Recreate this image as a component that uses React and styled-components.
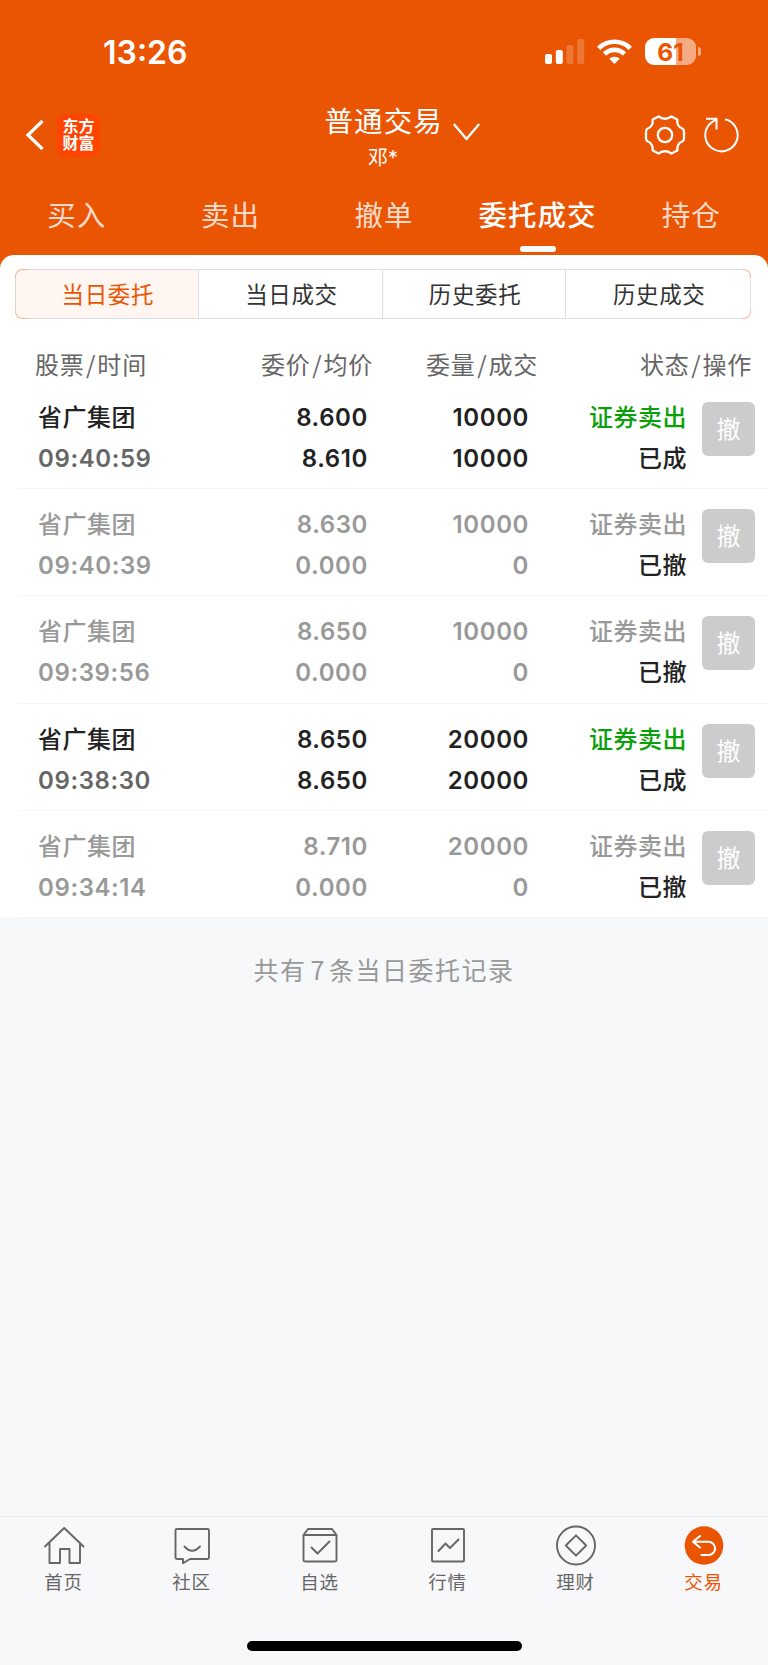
import React, { useState } from 'react'
import styled, { createGlobalStyle } from 'styled-components'

const ORANGE = '#ea5504'

const GlobalStyle = createGlobalStyle`
  * {
    box-sizing: border-box;
  }
  body {
    margin: 0;
    background: #f7f8fa;
    font-family: Inter, 'Noto Sans CJK SC', sans-serif;
    color: #222222;
  }
  button {
    border: none;
    background: none;
    padding: 0;
    font: inherit;
    color: inherit;
  }
  svg {
    display: block;
    flex: none;
    overflow: visible;
  }
`
const Page = styled.div`
  width: 768px;
  height: 1665px;
  display: flex;
  flex-direction: column;
  overflow: hidden;
`
const Header = styled.header`
  height: 271px;
  flex: none;
  background: ${ORANGE};
  color: white;
`
const StatusBar = styled.div`
  height: 103px;
  padding: 0 67px 0 103px;
  display: flex;
  align-items: center;
  justify-content: space-between;
`
const Clock = styled.div`
  padding-top: 3px;
  font-size: 32px;
  font-weight: 600;
  line-height: 40px;
`
const StatusIcons = styled.div`
  display: flex;
  align-items: center;
  gap: 13px;
`
const Battery = styled.div`
  display: flex;
  align-items: center;
  gap: 2px;
`
const BatteryBody = styled.div`
  width: 51px;
  height: 27px;
  border-radius: 9px;
  background: linear-gradient(to right, white ${p => p.$level}%, rgba(255, 255, 255, 0.5) ${p => p.$level}%);
  color: ${ORANGE};
  font-size: 24.5px;
  font-weight: 700;
  line-height: 28px;
  text-align: center;
`
const BatteryTip = styled.div`
  width: 3px;
  height: 9px;
  border-radius: 0 4px 4px 0;
  background: rgba(255, 255, 255, 0.5);
`
const NavBar = styled.div`
  height: 83px;
  padding: 0 29px 0 26px;
  display: grid;
  grid-template-columns: 1fr auto 1fr;
`
const NavLeft = styled.div`
  height: 64px;
  display: flex;
  align-items: center;
  gap: 13px;
`
const NavRight = styled(NavLeft)`
  justify-content: flex-end;
  gap: 19px;
`
const Logo = styled.div`
  width: 43px;
  height: 43px;
  border-radius: 9px;
  background: #ff4400;
  display: grid;
  grid-template-columns: 16px 16px;
  grid-template-rows: 17px 17px;
  place-content: center;
  font-size: 16px;
  font-weight: 700;
  line-height: 16px;
`
const Account = styled.div`
  display: grid;
  grid-template-columns: 117px 27px;
  column-gap: 11px;
  justify-content: center;
  padding: 2px 0 0 39px;
`
const AccountTitle = styled.div`
  font-size: 28.5px;
  letter-spacing: 1.1px;
  line-height: 34px;
  white-space: nowrap;
`
const AccountName = styled.div`
  font-size: 20px;
  line-height: 26px;
  margin-top: 6px;
  text-align: center;
`
const TitleArrow = styled.div`
  padding-top: 18px;
`
const Tabs = styled.div`
  height: 69px;
  display: grid;
  grid-template-columns: repeat(5, 1fr);
`
const Tab = styled.button`
  display: flex;
  flex-direction: column;
  align-items: center;
  font-size: 28.5px;
  line-height: 40px;
  padding-top: 10px;
  letter-spacing: 1px;
  font-weight: ${p => (p.$active ? 500 : 400)};
  color: ${p => (p.$active ? 'white' : 'rgba(255, 255, 255, 0.8)')};

  &::after {
    content: '';
    width: 36px;
    height: 6px;
    margin-top: 10px;
    border-radius: 3px;
    background: ${p => (p.$active ? 'white' : 'transparent')};
  }
`
const Panel = styled.section`
  flex: none;
  margin-top: -16px;
  height: 662px;
  padding-top: 14px;
  border-radius: 14px 14px 0 0;
  background: white;
`
const Segments = styled.div`
  height: 50px;
  margin: 0 17px 0 14.5px;
  display: grid;
  grid-template-columns: repeat(4, 1fr);
  border: 1px solid transparent;
  border-radius: 8px;
  background:
    linear-gradient(white, white) padding-box,
    linear-gradient(#dcdfe5, #dcdfe5) right center / 4px calc(100% - 16px) no-repeat border-box,
    linear-gradient(#e3d3cd, #e3d3cd) left center / 4px calc(100% - 16px) no-repeat border-box,
    linear-gradient(to right, #efab8a 8px, #dcdfe5 17px, #dcdfe5 calc(100% - 8px), #efab8a calc(100% - 8px)) border-box;
  overflow: hidden;
`
const Segment = styled.button`
  padding-left: 2px;
  font-size: 22.5px;
  letter-spacing: 0.6px;
  line-height: 49px;
  border-right: 1px solid #d9dce2;
  color: ${p => (p.$active ? ORANGE : '#333333')};
  background: ${p => (p.$active ? '#fff5f1' : 'white')};

  &:last-child {
    border-right: none;
  }
`
const ColumnHeads = styled.div`
  height: 63px;
  padding: 11px 16px 0 35px;
  display: grid;
  grid-template-columns: 169px 169px 165px 1fr;
  font-size: 24px;
  line-height: 68px;
  letter-spacing: 0.8px;
  color: #666666;
  white-space: nowrap;
`
const ColumnHead = styled.div`
  text-align: ${p => p.$align};
`
const Slash = styled.span`
  margin: 0 1px 0 1.5px;
  font-family: 'Noto Sans CJK SC', sans-serif;
`
const Row = styled.div`
  height: 107.2px;
  margin-left: 18px;
  padding: 15px 13px 0 20px;
  display: grid;
  grid-template-columns: 150px 180px 161px 158px 1fr;
  border-bottom: 1.5px solid #f4f5f7;
  color: ${p => (p.$cancelled ? '#999999' : '#222222')};
`
const Cell = styled.div`
  display: flex;
  flex-direction: column;
  align-items: ${p => (p.$right ? 'flex-end' : 'flex-start')};
  font-size: 24px;
  font-weight: 600;
  line-height: 41px;
  letter-spacing: 0.6px;
  white-space: nowrap;
`
const StockName = styled.div`
  font-weight: 500;
  letter-spacing: 0.5px;
`
const Time = styled.div`
  color: ${p => (p.$cancelled ? '#999999' : '#666666')};
`
const Side = styled.div`
  font-weight: 500;
  letter-spacing: 0.5px;
  color: ${p => (p.$cancelled ? '#999999' : '#0aa00a')};
`
const State = styled.div`
  font-weight: 500;
  letter-spacing: 0.5px;
  color: #222222;
`
const CancelButton = styled.button`
  width: 53px;
  height: 54px;
  margin-top: 5px;
  justify-self: end;
  border-radius: 6px;
  background: #cccccc;
  color: white;
  font-size: 24px;
  line-height: 56px;
`
const Summary = styled.p`
  margin: 0;
  padding-top: 32px;
  font-size: 25px;
  line-height: 40px;
  letter-spacing: 1.5px;
  text-align: center;
  color: #999999;
`
const Count = styled.span`
  margin: 0 3px 0 4px;
  font-family: 'Noto Sans CJK SC', sans-serif;
`
const TabBar = styled.nav`
  height: 149px;
  flex: none;
  margin-top: auto;
  border-top: 1px solid #e9eaec;
  background: #f8f8fb;
  display: flex;
  flex-direction: column;
  align-items: center;
  justify-content: space-between;
  padding-bottom: 14px;
`
const TabBarItems = styled.div`
  width: 100%;
  display: grid;
  grid-template-columns: repeat(6, 1fr);
`
const TabBarItem = styled.button`
  display: flex;
  flex-direction: column;
  align-items: center;
  padding-top: 8.5px;
  font-size: 18.5px;
  line-height: 33px;
  color: ${p => (p.$active ? ORANGE : '#666666')};
`
const TabBarLabel = styled.span`
  padding-right: 1px;
  letter-spacing: 0.8px;
`
const HomeIndicator = styled.div`
  width: 275px;
  height: 10px;
  border-radius: 5px;
  background: black;
`

const tradeTabs = ['买入', '卖出', '撤单', '委托成交', '持仓']
const segments = ['当日委托', '当日成交', '历史委托', '历史成交']

const columns = [
  { first: '股票', second: '时间', align: 'left' },
  { first: '委价', second: '均价', align: 'right' },
  { first: '委量', second: '成交', align: 'right' },
  { first: '状态', second: '操作', align: 'right' },
]

const orders = [
  { name: '省广集团', time: '09:40:59', price: '8.600', avg: '8.610', qty: '10000', done: '10000', side: '证券卖出', state: '已成' },
  { name: '省广集团', time: '09:40:39', price: '8.630', avg: '0.000', qty: '10000', done: '0', side: '证券卖出', state: '已撤' },
  { name: '省广集团', time: '09:39:56', price: '8.650', avg: '0.000', qty: '10000', done: '0', side: '证券卖出', state: '已撤' },
  { name: '省广集团', time: '09:38:30', price: '8.650', avg: '8.650', qty: '20000', done: '20000', side: '证券卖出', state: '已成' },
  { name: '省广集团', time: '09:34:14', price: '8.710', avg: '0.000', qty: '20000', done: '0', side: '证券卖出', state: '已撤' },
]

const line = {
  fill: 'none',
  stroke: 'currentColor',
  strokeWidth: 1.9,
  strokeLinecap: 'round',
  strokeLinejoin: 'round',
}

const bottomTabs = [
  { label: '首页', icon: <path {...line} d="M1 20.500 20.200 2 39.500 20.500M5.500 17V37H16V23H25.500V37H36V17" /> },
  { label: '社区', icon: (
    <g {...line}>
      <path d="M5 3H35.500a1.500 1.500 0 0 1 1.500 1.500V31.500a1.500 1.500 0 0 1-1.500 1.500H18L11 37.300V33H5A1.500 1.500 0 0 1 3.500 31.500V4.500A1.500 1.500 0 0 1 5 3Z" />
      <path d="M12.500 20.500Q20 29 28 20.500" />
    </g>
  ) },
  { label: '自选', icon: (
    <g {...line}>
      <path d="M3.500 9 8 3H32L36.500 9V34a1.500 1.500 0 0 1-1.500 1.500H5A1.500 1.500 0 0 1 3.500 34ZM3.500 9H36.500" />
      <path d="M11.500 21.500 17.500 27.500 29.500 15.500" />
    </g>
  ) },
  { label: '行情', icon: (
    <g {...line}>
      <rect x="4" y="3" width="32" height="32.500" rx="1" />
      <path d="M10.500 25 17.500 17.500 22 22 30.500 13.500" />
    </g>
  ) },
  { label: '理财', icon: (
    <g {...line}>
      <circle cx="20" cy="19.500" r="19" />
      <path d="M20 9.300 30.200 19.500 20 29.700 9.800 19.500Z" />
    </g>
  ) },
  { label: '交易', icon: (
    <g>
      <circle cx="20" cy="19.500" r="19.300" fill={ORANGE} />
      <path {...line} stroke="white" strokeWidth="2.100" d="M16 10 9 15.800 16 21.500M9.500 15.800H24.500a6.600 6.600 0 0 1 0 13.200H17.500" />
    </g>
  ) },
]

function SignalIcon() {
  return (
    <svg width="39" height="25" viewBox="0 0 39 25" fill="white">
      <rect x="0" y="15" width="7" height="10" rx="2" />
      <rect x="10.800" y="11" width="7" height="14" rx="2" />
      <rect x="21.500" y="6" width="7" height="19" rx="2" opacity="0.2" />
      <rect x="32.200" y="0" width="7" height="25" rx="2" opacity="0.2" />
    </svg>
  )
}

function WifiIcon() {
  return (
    <svg width="35" height="25" viewBox="0 0 35 25" fill="none" stroke="white" strokeWidth="4.600">
      <path d="M1.700 9.300a22.500 22.500 0 0 1 31.600 0" />
      <path d="M7.500 15a14.300 14.300 0 0 1 20 0" />
      <path d="M17.500 25 12.300 19.800a7.400 7.400 0 0 1 10.400 0Z" fill="white" stroke="none" />
    </svg>
  )
}

function GearIcon() {
  return (
    <svg width="40" height="40" viewBox="-20 -20 40 40" fill="none" stroke="white" strokeWidth="2.300" strokeLinejoin="round">
      <path d="M-6.500-18.500Q0-14 6.500-18.500L12.300-15.500Q11.500-8.500 18-6Q19-5 19-3V3Q19 5 18 6Q11.500 8.500 12.300 15.500L6.500 18.500Q0 14-6.500 18.500L-12.300 15.500Q-11.500 8.500-18 6Q-19 5-19 3V-3Q-19-5-18-6Q-11.500-8.500-12.300-15.500Z" />
      <circle r="7.200" />
    </svg>
  )
}

function RefreshIcon() {
  return (
    <svg width="35" height="40" viewBox="-17.500 -20 35 40" fill="none" stroke="white" strokeWidth="2">
      <path d="M3.500-15.700A16.200 16.200 0 1 1-11-11.800L-5-16M-15.500-16.200H-5V-5.500" />
    </svg>
  )
}

function OrderRow({ order }) {
  const cancelled = order.state === '已撤'
  return (
    <Row $cancelled={cancelled}>
      <Cell>
        <StockName>{order.name}</StockName>
        <Time $cancelled={cancelled}>{order.time}</Time>
      </Cell>
      <Cell $right>
        <span>{order.price}</span>
        <span>{order.avg}</span>
      </Cell>
      <Cell $right>
        <span>{order.qty}</span>
        <span>{order.done}</span>
      </Cell>
      <Cell $right>
        <Side $cancelled={cancelled}>{order.side}</Side>
        <State>{order.state}</State>
      </Cell>
      <CancelButton>撤</CancelButton>
    </Row>
  )
}

export default function App() {
  const [tab, setTab] = useState(3)
  const [segment, setSegment] = useState(0)

  return (
    <Page>
      <GlobalStyle />
      <Header>
        <StatusBar>
          <Clock>13:26</Clock>
          <StatusIcons>
            <SignalIcon />
            <WifiIcon />
            <Battery>
              <BatteryBody $level={61}>61</BatteryBody>
              <BatteryTip />
            </Battery>
          </StatusIcons>
        </StatusBar>
        <NavBar>
          <NavLeft>
            <svg width="18" height="30" viewBox="0 0 18 30" fill="none" stroke="white" strokeWidth="3.200">
              <path d="M16.500 1 2 15 16.500 29" />
            </svg>
            <Logo>
              <span>东</span>
              <span>方</span>
              <span>财</span>
              <span>富</span>
            </Logo>
          </NavLeft>
          <Account>
            <div>
              <AccountTitle>普通交易</AccountTitle>
              <AccountName>邓*</AccountName>
            </div>
            <TitleArrow>
              <svg width="27" height="18" viewBox="0 0 27 18" fill="none" stroke="white" strokeWidth="2.300">
                <path d="M0.800 1 13.500 16 26.200 1" />
              </svg>
            </TitleArrow>
          </Account>
          <NavRight>
            <GearIcon />
            <RefreshIcon />
          </NavRight>
        </NavBar>
        <Tabs>
          {tradeTabs.map((label, i) => (
            <Tab key={label} $active={i === tab} onClick={() => setTab(i)}>{label}</Tab>
          ))}
        </Tabs>
      </Header>
      <Panel>
        <Segments>
          {segments.map((label, i) => (
            <Segment key={label} $active={i === segment} onClick={() => setSegment(i)}>{label}</Segment>
          ))}
        </Segments>
        <ColumnHeads>
          {columns.map(col => (
            <ColumnHead key={col.first} $align={col.align}>
              {col.first}<Slash>/</Slash>{col.second}
            </ColumnHead>
          ))}
        </ColumnHeads>
        {orders.map(order => <OrderRow key={order.time} order={order} />)}
      </Panel>
      <Summary>共有<Count>7</Count>条当日委托记录</Summary>
      <TabBar>
        <TabBarItems>
          {bottomTabs.map(({ label, icon }) => (
            <TabBarItem key={label} $active={label === '交易'}>
              <svg width="40" height="40" viewBox="0 0 40 40">{icon}</svg>
              <TabBarLabel>{label}</TabBarLabel>
            </TabBarItem>
          ))}
        </TabBarItems>
        <HomeIndicator />
      </TabBar>
    </Page>
  )
}
